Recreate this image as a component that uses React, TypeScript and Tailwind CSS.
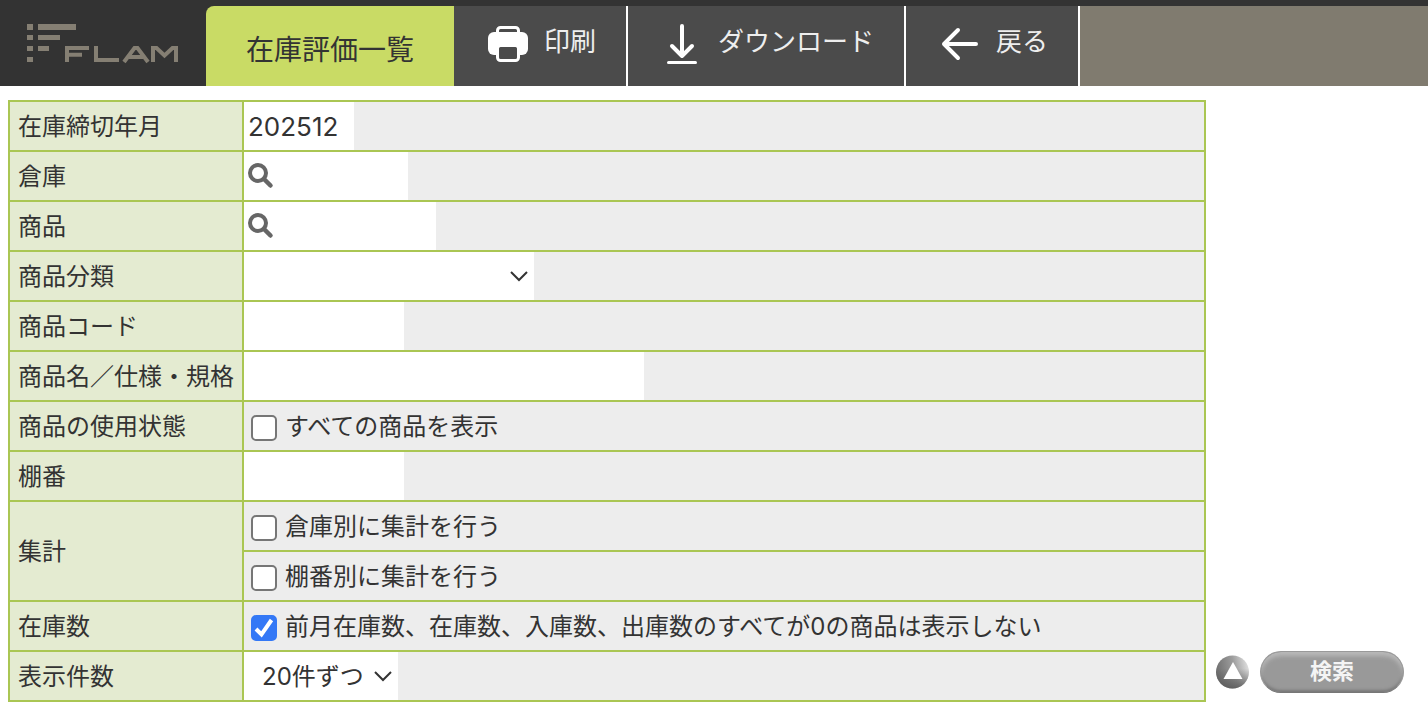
import type { ReactNode } from "react";

const Logo = () => (
  <svg width="152" height="40" viewBox="0 0 152 40" role="img" aria-label="FLAM" fill="#857f73">
    <path d="M0 0h6v6H0zM0 11h6v5H0zM0 22h6v5H0zM0 33h6v5H0zM11 0h38v6H11zM11 11h22v5H11zM11 22h11v5H11z" />
    <g fill="none" stroke="#857f73" strokeWidth="4">
      <path d="M62 24H40V38M40 30.700h15" />
      <path d="M69 22v14h23" />
      <path d="M97 38l10.500-14h3L121 38M102 33h14" />
      <path d="M126 38V24h3.500l8 7.500 8-7.500h3.500V38" />
    </g>
  </svg>
);

const PrintIcon = () => (
  <svg width="40" height="40" viewBox="0 0 40 40" aria-hidden="true">
    <rect x="9.5" y="3.5" width="21" height="12" rx="3" fill="none" stroke="#fff" strokeWidth="3" />
    <rect x="0" y="8" width="40" height="23" rx="6" fill="#fff" />
    <rect x="9.5" y="21.5" width="21" height="15" rx="3" fill="#4b4b4b" stroke="#fff" strokeWidth="3" />
  </svg>
);

const DownloadIcon = () => (
  <svg
    width="40"
    height="40"
    viewBox="0 0 40 40"
    fill="none"
    stroke="#fff"
    strokeLinecap="round"
    strokeLinejoin="round"
    aria-hidden="true"
  >
    <path d="M20 2v30M10 22l10 10 10-10" strokeWidth="4" />
    <path d="M6.500 38.500h27" strokeWidth="3" />
  </svg>
);

const BackIcon = () => (
  <svg
    width="40"
    height="40"
    viewBox="0 0 40 40"
    fill="none"
    stroke="#fff"
    strokeWidth="4"
    strokeLinecap="round"
    strokeLinejoin="round"
    aria-hidden="true"
  >
    <path d="M36 20H4M18 6L4 20l14 14" />
  </svg>
);

const SearchIcon = () => (
  <svg width="26" height="26" viewBox="0 0 26 26" fill="none" stroke="#666" aria-hidden="true">
    <circle cx="10" cy="10" r="8" strokeWidth="4" />
    <path d="M16 16l6.500 6.500" strokeWidth="4.500" strokeLinecap="round" />
  </svg>
);

const Chevron = () => (
  <svg
    className="pointer-events-none absolute top-[19px] right-[6px]"
    width="18"
    height="12"
    viewBox="0 0 18 12"
    fill="none"
    stroke="#333"
    strokeWidth="2"
    aria-hidden="true"
  >
    <path d="M1 1l8 8 8-8" />
  </svg>
);

const ToolButton = ({ icon, label }: { icon: ReactNode; label: string }) => (
  <button
    type="button"
    className="flex h-20 items-center gap-4 border-r-2 border-white bg-[#4b4b4b] pr-[30px] pb-1 pl-[34px] text-[26px] leading-8 whitespace-nowrap text-[#eee]"
  >
    {icon}
    <span className="pb-1">{label}</span>
  </button>
);

const Row = ({
  label,
  htmlFor,
  rowSpan,
  children,
}: {
  label: string;
  htmlFor?: string;
  rowSpan?: number;
  children: ReactNode;
}) => (
  <tr>
    <th
      scope="row"
      rowSpan={rowSpan}
      className="w-px border-2 border-[#aac653] bg-[#e4ebd1] px-2 pt-0.5 text-left font-normal whitespace-nowrap"
    >
      {htmlFor ? <label htmlFor={htmlFor}>{label}</label> : label}
    </th>
    <td className="border-2 border-[#aac653] bg-[#ededed] p-0">{children}</td>
  </tr>
);

const Lookup = ({ id, label, width }: { id: string; label: string; width: string }) => (
  <div className={`flex h-12 items-center bg-white pl-1 ${width}`}>
    <button type="button" aria-label={`${label}を検索`}>
      <SearchIcon />
    </button>
    <input id={id} type="text" className="h-12 min-w-0 flex-1 px-1 outline-none" />
  </div>
);

const Check = ({ id, label, checked }: { id: string; label: string; checked?: boolean }) => (
  <div className="flex h-12 items-center gap-2 pl-[7px]">
    <span className="relative mt-1 h-[26px] w-[26px]">
      <input
        id={id}
        type="checkbox"
        defaultChecked={checked}
        className="peer block h-[26px] w-[26px] appearance-none rounded-[5px] border-2 border-[#767676] bg-white checked:border-[#3478f6] checked:bg-[#3478f6]"
      />
      <svg
        className="pointer-events-none absolute inset-0 hidden peer-checked:block"
        width="26"
        height="26"
        viewBox="0 0 26 26"
        fill="none"
        stroke="#fff"
        strokeWidth="4"
        aria-hidden="true"
      >
        <path d="M5 14l5.500 5.500L20.500 5" />
      </svg>
    </span>
    <label htmlFor={id} className="pt-0.5">
      {label}
    </label>
  </div>
);

const App = () => {
  return (
    <div className="font-[Inter,'Noto_Sans_CJK_JP',sans-serif] text-[#333]">
      <header className="flex border-t-[6px] border-[#333] bg-[#807b6f]">
        <div className="flex bg-[#333]">
          <a href="#" className="flex w-[206px] items-start pt-[18px] pl-[27px]">
            <Logo />
          </a>
          <h1 className="flex h-20 items-center rounded-tl-lg bg-[#c9db65] px-10 pt-2 text-[28px] leading-8 whitespace-nowrap">
            在庫評価一覧
          </h1>
        </div>
        <nav className="flex">
          <ToolButton icon={<PrintIcon />} label="印刷" />
          <ToolButton icon={<DownloadIcon />} label="ダウンロード" />
          <ToolButton icon={<BackIcon />} label="戻る" />
        </nav>
      </header>

      <form className="flex items-end pt-[14px] pr-6 pl-2 text-2xl">
        <table className="flex-1 border-collapse">
          <tbody>
            <Row label="在庫締切年月" htmlFor="month">
              <input
                id="month"
                type="text"
                defaultValue="202512"
                className="block h-12 w-[110px] bg-white px-1 text-[26px] outline-none"
              />
            </Row>
            <Row label="倉庫" htmlFor="warehouse">
              <Lookup id="warehouse" label="倉庫" width="w-[164px]" />
            </Row>
            <Row label="商品" htmlFor="product">
              <Lookup id="product" label="商品" width="w-[192px]" />
            </Row>
            <Row label="商品分類" htmlFor="category">
              <div className="relative w-[290px]">
                <select id="category" className="block h-12 w-full appearance-none bg-white pl-4 outline-none">
                  <option></option>
                </select>
                <Chevron />
              </div>
            </Row>
            <Row label="商品コード" htmlFor="code">
              <input id="code" type="text" className="block h-12 w-40 bg-white px-1 outline-none" />
            </Row>
            <Row label="商品名／仕様・規格" htmlFor="name">
              <input id="name" type="text" className="block h-12 w-[400px] bg-white px-1 outline-none" />
            </Row>
            <Row label="商品の使用状態">
              <Check id="show-all" label="すべての商品を表示" />
            </Row>
            <Row label="棚番" htmlFor="shelf">
              <input id="shelf" type="text" className="block h-12 w-40 bg-white px-1 outline-none" />
            </Row>
            <Row label="集計" rowSpan={2}>
              <Check id="by-warehouse" label="倉庫別に集計を行う" />
            </Row>
            <tr>
              <td className="border-2 border-[#aac653] bg-[#ededed] p-0">
                <Check id="by-shelf" label="棚番別に集計を行う" />
              </td>
            </tr>
            <Row label="在庫数">
              <Check
                id="hide-zero"
                label="前月在庫数、在庫数、入庫数、出庫数のすべてが0の商品は表示しない"
                checked
              />
            </Row>
            <Row label="表示件数" htmlFor="per-page">
              <div className="relative w-[154px]">
                <select id="per-page" className="block h-12 w-full appearance-none bg-white pt-0.5 pl-[18px] outline-none">
                  <option>20件ずつ</option>
                </select>
                <Chevron />
              </div>
            </Row>
          </tbody>
        </table>

        <div className="flex shrink-0 items-center gap-[10px] pb-[9px] pl-[10px]">
          <button type="button" aria-label="上へ">
            <svg width="34" height="34" viewBox="0 0 34 34">
              <defs>
                <linearGradient id="ball" x1="0" y1="0.5" x2="1" y2="0.3">
                  <stop offset="0" stopColor="#6e6e6e" />
                  <stop offset="0.55" stopColor="#9c9c9c" />
                  <stop offset="1" stopColor="#e2e2e2" />
                </linearGradient>
                <linearGradient id="shade" x1="0.5" y1="0.4" x2="0.5" y2="1">
                  <stop offset="0" stopColor="#555" stopOpacity="0" />
                  <stop offset="1" stopColor="#555" stopOpacity="0.8" />
                </linearGradient>
              </defs>
              <circle cx="16.500" cy="17" r="16.500" fill="url(#ball)" />
              <circle cx="16.500" cy="17" r="16.500" fill="url(#shade)" />
              <path d="M17 7l9.500 17h-19z" fill="#fff" />
            </svg>
          </button>
          <button
            type="submit"
            className="h-[42px] w-36 rounded-full border border-[#999] border-b-[#777] bg-[#999] pb-0.5 text-[22px] leading-8 font-bold text-[#f4f4f4] shadow-[inset_0_4px_4px_#b8b8b8,inset_0_-2px_3px_#777]"
          >
            検索
          </button>
        </div>
      </form>
    </div>
  );
};

export default App;
